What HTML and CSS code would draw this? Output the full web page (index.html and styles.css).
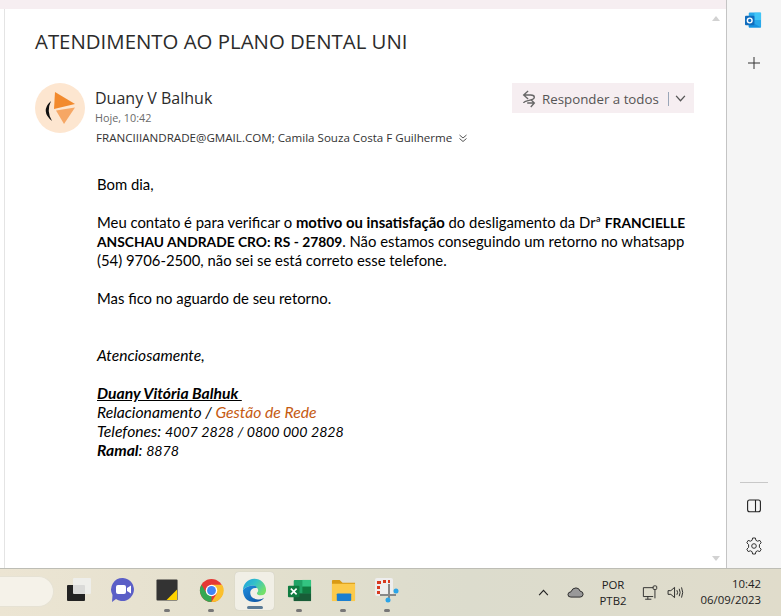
FILE: index.html
```html
<!DOCTYPE html>
<html lang="pt-BR">
<head>
<meta charset="utf-8">
<title>Atendimento ao plano dental Uni</title>
<link rel="stylesheet" href="styles.css">
</head>
<body>
<div class="app">
  <div class="main">
    <div class="pane">
      <div class="topstrip"></div>
      <div class="mailwrap">
        <div class="mail">
          <h1 class="subject">ATENDIMENTO AO PLANO DENTAL UNI</h1>
          <div class="header">
            <svg class="avatar" viewBox="0 0 50 50" width="50" height="50">
              <circle cx="25" cy="25" r="25" fill="#fde6d0"/>
              <path d="M20 9 L40 21 L19 26 Z" fill="#f28a2e"/>
              <path d="M21 27.5 L40 24.5 L29 41 Z" fill="#f6a765"/>
              <path d="M16 18 Q5 28 17 38 Q11 28 16 18 Z" fill="#111"/>
            </svg>
            <div class="meta">
              <div class="sender">Duany V Balhuk</div>
              <div class="date">Hoje, 10:42</div>
              <div class="recipients">FRANCIIIANDRADE@GMAIL.COM; Camila Souza Costa F Guilherme
                <svg class="dbl" viewBox="0 0 10 10" width="10" height="10"><path d="M1.5 2 L5 5 L8.5 2 M1.5 5.5 L5 8.5 L8.5 5.5" fill="none" stroke="#555" stroke-width="1"/></svg>
              </div>
            </div>
            <div class="reply">
              <svg class="replyicon" viewBox="0 0 18 20" width="16" height="18"><path d="M8 1 L3 5.5 L8 10 M3 5.5 H11 Q15 5.5 15 8 Q15 10 11 11 L7 12 Q3 13 3 14.5 M11 10.5 L15 14.5 L11 19 M15 14.5 H7" fill="none" stroke="#666" stroke-width="1.5"/></svg>
              <span class="replylabel">Responder a todos</span>
              <span class="replysep"></span>
              <svg class="chev" viewBox="0 0 12 8" width="11" height="7"><path d="M1 1 L6 6.5 L11 1" fill="none" stroke="#555" stroke-width="1.5"/></svg>
            </div>
          </div>
          <div class="body">
            <p>Bom dia,</p>
            <p>Meu contato é para verificar o <b>motivo ou insatisfação</b> do desligamento da Drª <b class="caps">FRANCIELLE ANSCHAU ANDRADE CRO: RS - 27809</b>. Não estamos conseguindo um retorno no whatsapp (54) 9706-2500, não sei se está correto esse telefone.</p>
            <p>Mas fico no aguardo de seu retorno.</p>
            <p class="gap2"><i class="ital">Atenciosamente,</i></p>
            <p class="sig"><b><u>Duany Vitória Balhuk&nbsp;</u></b><br>
            Relacionamento / <span class="org">Gestão de Rede</span><br>
            Telefones: <span class="num">4007 2828 / 0800 000 2828</span><br>
            <b>Ramal</b>: <span class="num">8878</span></p>
          </div>
        </div>
        <div class="scrollbar">
          <span class="arrow up"></span>
          <span class="arrow down"></span>
        </div>
      </div>
    </div>
    <aside class="side">
      <svg class="outlook" viewBox="0 0 18 18" width="17" height="17">
        <rect x="4" y="0.5" width="13" height="16" rx="1" fill="#28a8ea"/>
        <rect x="10" y="0.5" width="7" height="8" fill="#50d9ff" opacity=".6"/>
        <path d="M4 9 L17 16.5 H5 Q4 16.5 4 15.5 Z" fill="#1490df"/>
        <rect x="0" y="4" width="10" height="10" rx="1" fill="#0f6cbd"/>
        <circle cx="5" cy="9" r="2.5" fill="none" stroke="#fff" stroke-width="1.5"/>
      </svg>
      <svg class="plus" viewBox="0 0 12 12" width="12" height="12"><path d="M6 0 V12 M0 6 H12" stroke="#333" stroke-width="1"/></svg>
      <div class="sidefill"></div>
      <div class="siderule"></div>
      <svg class="panel" viewBox="0 0 14 14" width="14" height="14"><rect x="0.6" y="1" width="12.8" height="11.8" rx="2" fill="none" stroke="#222" stroke-width="1.1"/><path d="M8.5 1 V12.8" stroke="#222" stroke-width="1.1"/></svg>
      <svg class="gear" viewBox="0 0 18 18" width="18" height="18"><path d="M7.6 1 H10.4 L10.9 3.3 L12.6 4.2 L14.8 3.4 L16.2 5.8 L14.4 7.6 V10.4 L16.2 12.2 L14.8 14.6 L12.6 13.8 L10.9 14.7 L10.4 17 H7.6 L7.1 14.7 L5.4 13.8 L3.2 14.6 L1.8 12.2 L3.6 10.4 V7.6 L1.8 5.8 L3.2 3.4 L5.4 4.2 L7.1 3.3 Z" fill="none" stroke="#333" stroke-width="1" stroke-linejoin="round"/><circle cx="9" cy="9" r="2.3" fill="none" stroke="#333" stroke-width="1"/></svg>
    </aside>
  </div>
  <footer class="taskbar">
    <div class="search"></div>
    <div class="apps">
      <div class="tb"><svg viewBox="0 0 26 26" width="26" height="26"><rect x="1" y="8" width="18" height="16" rx="1" fill="#222"/><rect x="7" y="1" width="18" height="16" rx="1" fill="#eeeeec" opacity=".9"/></svg></div>
      <div class="tb"><svg viewBox="0 0 26 26" width="26" height="26"><path d="M13 1 A11.5 11.5 0 1 1 6 22 L2 25 L2.5 18 A11.5 11.5 0 0 1 13 1 Z" fill="#5b5fc7"/><rect x="6" y="8" width="10" height="9" rx="2" fill="#fff"/><path d="M17 11 L21 8.5 V16.5 L17 14 Z" fill="#fff"/></svg></div>
      <div class="tb dot"><svg viewBox="0 0 24 24" width="23" height="23"><rect x="0.5" y="0.5" width="22" height="22" rx="1" fill="#333"/><path d="M22 11 V22 H11 Z" fill="#ffd400"/></svg></div>
      <div class="tb dot"><svg viewBox="0 0 26 26" width="25" height="25"><circle cx="13" cy="13" r="12" fill="#e53935"/><path d="M13 25 A12 12 0 0 1 2.6 7 L8 16 L13 19 Z" fill="#34a853"/><path d="M13 7 H24 A12 12 0 0 1 13 25 L18.5 16 Z" fill="#fbc02d"/><circle cx="13" cy="13" r="6" fill="#fff"/><circle cx="13" cy="13" r="4.6" fill="#4285f4"/></svg></div>
      <div class="tb active dot"><svg viewBox="0 0 26 26" width="25" height="25">
        <defs><linearGradient id="edgeTop" x1="0" y1="0" x2="1" y2="0.6"><stop offset="0" stop-color="#1b9de2"/><stop offset=".5" stop-color="#35c1c8"/><stop offset="1" stop-color="#74e06a"/></linearGradient>
        <linearGradient id="edgeLow" x1="0" y1="0" x2="1" y2="1"><stop offset="0" stop-color="#1f8fe0"/><stop offset="1" stop-color="#0b4f9e"/></linearGradient></defs>
        <path d="M1 13 A12 12 0 0 1 25 12.5 Q25.2 18 19.5 18 Q15.5 18 15.5 15.5 Q17.5 14 16.5 11.5 Q14.5 7 9 8 Q3 9 1 13 Z" fill="url(#edgeTop)"/>
        <path d="M1 13 Q3 9 9 8 Q14.5 7 15.6 10.5 Q10 9.5 8.7 14 Q7.7 20.5 15 22 Q20 23 23 20.5 Q19.5 25.2 13 25 Q1.5 24.5 1 13 Z" fill="url(#edgeLow)"/>
      </svg></div>
      <div class="tb dot"><svg viewBox="0 0 26 26" width="25" height="25"><rect x="7" y="2" width="18" height="22" rx="1" fill="#21a366"/><rect x="16" y="2" width="9" height="7" fill="#33c481"/><rect x="16" y="9" width="9" height="7" fill="#107c41"/><rect x="7" y="16" width="18" height="8" fill="#185c37"/><rect x="1" y="8" width="12" height="12" rx="1" fill="#107c41"/><path d="M4 11 L10 17 M10 11 L4 17" stroke="#fff" stroke-width="1.7"/></svg></div>
      <div class="tb dot"><svg viewBox="0 0 26 26" width="25" height="25"><path d="M1 3 Q1 2 2 2 H9 L12 5 H25 V23 H1 Z" fill="#d99a14"/><rect x="1" y="6" width="24" height="18" fill="#fcca4a"/><rect x="6" y="16" width="15" height="8" rx="1" fill="#1b7fd0"/></svg></div>
      <div class="tb dot"><svg viewBox="0 0 26 26" width="26" height="26"><rect x="1" y="1" width="18" height="18" rx="2" fill="#eeeeee"/><path d="M3 4 H7 V7 H3 Z M9 3 H12 V6 H9 Z M14 3 H16 V6 H14 Z M3 9 H6 V12 H3 Z M3 14 H6 V17 H3 Z" fill="#d8391f"/><path d="M15 7 V21 M6 18 H22" stroke="#888" stroke-width="2"/><circle cx="22" cy="14" r="2.5" fill="#2aa4e8"/><circle cx="14" cy="23" r="2.5" fill="#2aa4e8"/></svg></div>
    </div>
    <div class="tray">
      <svg class="trayup" viewBox="0 0 12 8" width="11" height="7"><path d="M1 7 L6 1.5 L11 7" fill="none" stroke="#222" stroke-width="1.3"/></svg>
      <svg class="cloud" viewBox="0 0 18 12" width="17" height="11"><path d="M4 11 Q0.5 11 0.8 8 Q1 5.5 4 5.3 Q5.5 1 9.5 1 Q13 1 14 4.5 Q17.5 5 17.3 8 Q17 11 14 11 Z" fill="#999" stroke="#222" stroke-width="1"/></svg>
      <div class="lang"><span>POR</span><span>PTB2</span></div>
      <svg class="net" viewBox="0 0 18 18" width="17" height="16"><path d="M12 3 H1 V13 H12 M6 13 V16 M3 16 H10" fill="none" stroke="#222" stroke-width="1"/><rect x="12" y="1" width="4" height="4" rx="1" fill="none" stroke="#222"/><path d="M14 5 V15" stroke="#222"/></svg>
      <svg class="vol" viewBox="0 0 18 14" width="17" height="13"><path d="M1 5 H4 L8 1.5 V12.5 L4 9 H1 Z M10.5 4.5 Q12 7 10.5 9.5 M13 3 Q15 7 13 11 M15.5 1.5 Q18 7 15.5 12.5" fill="none" stroke="#222" stroke-width="1"/></svg>
      <div class="clock"><span>10:42</span><span>06/09/2023</span></div>
    </div>
  </footer>
</div>
</body>
</html>
```
FILE: styles.css
```css
* { box-sizing: border-box; }
html, body { margin: 0; height: 100%; overflow: hidden; }
body { font-family: "Open Sans", sans-serif; background: #fff; color: #242424; }
.app { display: flex; flex-direction: column; height: 616px; width: 781px; }
.main { display: flex; height: 568px; }
.pane { display: flex; flex-direction: column; border-right: 1px solid #c4c4c4; width: 727px; }
.topstrip { height: 9px; background: #f6eef1; }
.mailwrap { flex: 1; display: flex; min-height: 0; }
.mail { flex: 1; border-left: 1px solid #e4e4e4; margin-left: 4px; padding: 18px 0 0 30px; min-width: 0; }
.subject { margin: 0; font-size: 20.4px; font-weight: 400; line-height: 28px; color: #2b2b2b; white-space: nowrap; }
.header { display: flex; align-items: flex-start; margin-top: 28px; position: relative; padding-right: 18px; }
.avatar { flex: none; margin-right: 10px; }
.meta { flex: 1; min-width: 0; }
.sender { font-size: 16px; line-height: 22px; color: #2b2b2b; margin-top: 4px; }
.date { font-size: 10.8px; line-height: 16px; color: #6a6a6a; margin-top: 1px; }
.recipients { font-size: 11.6px; line-height: 16px; color: #333; margin-top: 4px; margin-left: 1px; white-space: nowrap; }
.dbl { margin-left: 3px; vertical-align: -1px; }
.reply { position: absolute; right: 11px; top: 0; height: 30px; width: 182px; background: #f6eef1; display: flex; align-items: center; padding: 1px 0 0 9px; }
.replylabel { font-size: 13.3px; color: #555; margin-left: 5px; white-space: nowrap; }
.replysep { width: 1px; height: 14px; background: #9aa6b8; margin: 0 6px 0 9px; }
.chev { flex: none; }
.body { margin: 29px 0 0 62px; width: 600px; font-family: Lato, sans-serif; font-size: 14.85px; line-height: 19px; color: #000; }
.body p { margin: 0 0 19px; }
.body .gap2 { margin-top: 38px; }
.body .sig { font-style: italic; font-size: 15.7px; }
.caps { font-size: 13.8px; }
.ital { font-size: 15.6px; }
.num { font-size: 14.2px; }
.org { color: #c55a11; }
.scrollbar { width: 21px; display: flex; flex-direction: column; justify-content: space-between; align-items: center; padding: 7px 0 7px; }
.arrow { width: 0; height: 0; border-left: 4px solid transparent; border-right: 4px solid transparent; }
.arrow.up { border-bottom: 5px solid #d2d2d2; }
.arrow.down { border-top: 5px solid #d2d2d2; }
.side { width: 54px; background: #f5f5f5; display: flex; flex-direction: column; align-items: center; padding: 12px 0 13px; }
.outlook { margin-left: -1px; }
.plus { margin-top: 28px; }
.sidefill { flex: 1; }
.siderule { width: 28px; height: 1px; background: #c8c8c8; margin-bottom: 16px; }
.panel { margin-bottom: 24px; }
.taskbar { height: 48px; display: flex; align-items: center; border-top: 1px solid #bdbdb5; background: linear-gradient(90deg, #ece5d3 0%, #e2dfcd 35%, #dcdccd 60%, #e0dccb 100%); color: #222; position: relative; }
.search { width: 54px; height: 31px; margin-top: -2px; background: #f5f2e9; border-radius: 0 16px 16px 0; border: 1px solid #e6e2d4; border-left: 0; flex: none; }
.apps { display: flex; margin-left: 3px; }
.tb { width: 44px; height: 48px; display: flex; align-items: center; justify-content: center; position: relative; padding-bottom: 5px; }
.tb.active { background: #f1efe6; border-radius: 4px; height: 38px; width: 39px; margin: 3px 3px 0 2px; box-shadow: 0 0 1px #bbb; overflow: visible; padding-bottom: 0; }
.tb.dot::after { content: ""; position: absolute; left: 50%; bottom: 5px; width: 6px; height: 3px; margin-left: -3px; border-radius: 2px; background: #777; }
.tb.active::after { width: 16px; margin-left: -8px; bottom: 1px; background: #5a7a96; }
.tray { margin-left: auto; display: flex; align-items: center; height: 100%; font-size: 11.4px; padding-right: 20px; }
.trayup { margin-right: 18px; }
.cloud { margin-right: 11px; }
.lang { display: flex; flex-direction: column; align-items: center; line-height: 16px; width: 36px; margin-right: 11px; }
.net { margin-right: 8px; }
.vol { margin-right: 14px; }
.clock { display: flex; flex-direction: column; align-items: flex-end; line-height: 16px; width: 63px; margin-top: -2px; }
```
